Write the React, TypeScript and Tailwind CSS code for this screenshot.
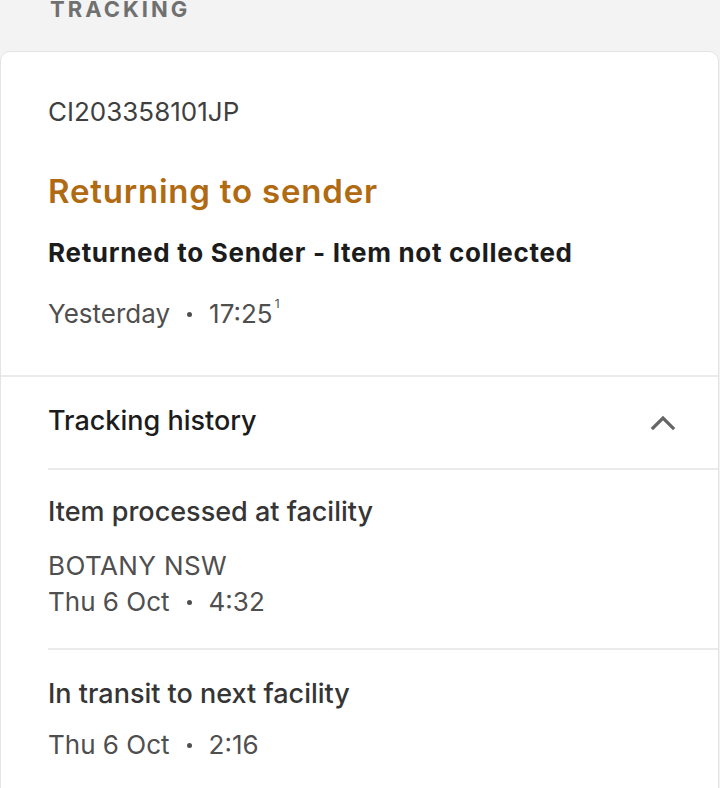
import React from 'react';

const Dot: React.FC = () => <span className="mx-[17px] inline-block h-[5px] w-[5px] rounded-full bg-current" />;

type HistoryItem = { title: string; place?: string; date: string; time: string };

const history: HistoryItem[] = [
  { title: 'Item processed at facility', place: 'BOTANY NSW', date: 'Thu 6 Oct', time: '4:32' },
  { title: 'In transit to next facility', date: 'Thu 6 Oct', time: '2:16' },
];

const App: React.FC = () => {
  return (
    <div className="min-h-[788px] w-[720px] overflow-hidden bg-[#f3f3f3]" style={{ fontFamily: 'Inter, Roboto, "Noto Sans", sans-serif' }}>
      <div className="h-[53px] pl-[50px]">
        <p className="-mt-[2px] text-[22px] font-bold leading-none tracking-[3px] text-[#707070]">TRACKING</p>
      </div>

      <div className="w-[719px] rounded-t-[10px] border border-[#e4e4e4] bg-white">
        <div className="px-[47px] pt-[44px] pb-[45px]">
          <p className="text-[26px] leading-[32px] text-[#3f3f3f]">CI203358101JP</p>
          <h1 className="mt-[43px] text-[33px] font-semibold leading-[40px] tracking-[0.8px] text-[#b06a12]">Returning to sender</h1>
          <p className="mt-[26px] text-[26px] font-bold leading-[32px] tracking-[0.7px] text-[#1c1c1c]">Returned to Sender - Item not collected</p>
          <p className="mt-[29px] flex items-center text-[26px] leading-[32px] text-[#4f4f4f]">
            <span>Yesterday</span>
            <Dot />
            <span>17:25</span>
            <span className="relative -top-[10px] ml-[2px] text-[12px] leading-none">1</span>
          </p>
        </div>

        <div className="h-[2px] bg-[#ebebeb]" />

        <div className="pl-[47px]">
          <div className="flex items-center justify-between pt-[26px] pb-[29px] pr-[42px]">
            <h2 className="text-[27px] font-medium leading-[36px] text-[#1c1c1c]">Tracking history</h2>
            <svg className="mt-[4px]" width="26" height="16" viewBox="0 0 26 16" fill="none" stroke="#666666" strokeWidth="3.2" strokeLinecap="square">
              <path d="M3 13 L13 3 L23 13" />
            </svg>
          </div>

          {history.map((item) => (
            <div key={item.title} className="border-t-2 border-[#ebebeb]">
              <div className={item.place ? 'pt-[24px] pb-[28px]' : 'pt-[26px] pb-[28px]'}>
                <p className="text-[27px] font-medium leading-[36px] text-[#353535]">{item.title}</p>
                {item.place && <p className="mt-[18px] text-[26px] leading-[36px] tracking-[0.4px] text-[#4f4f4f]">{item.place}</p>}
                <p className={`${item.place ? '' : 'mt-[15px]'} flex items-center text-[26px] leading-[36px] text-[#4f4f4f]`}>
                  <span>{item.date}</span>
                  <Dot />
                  <span>{item.time}</span>
                </p>
              </div>
            </div>
          ))}
        </div>
      </div>
    </div>
  );
};

export default App;
